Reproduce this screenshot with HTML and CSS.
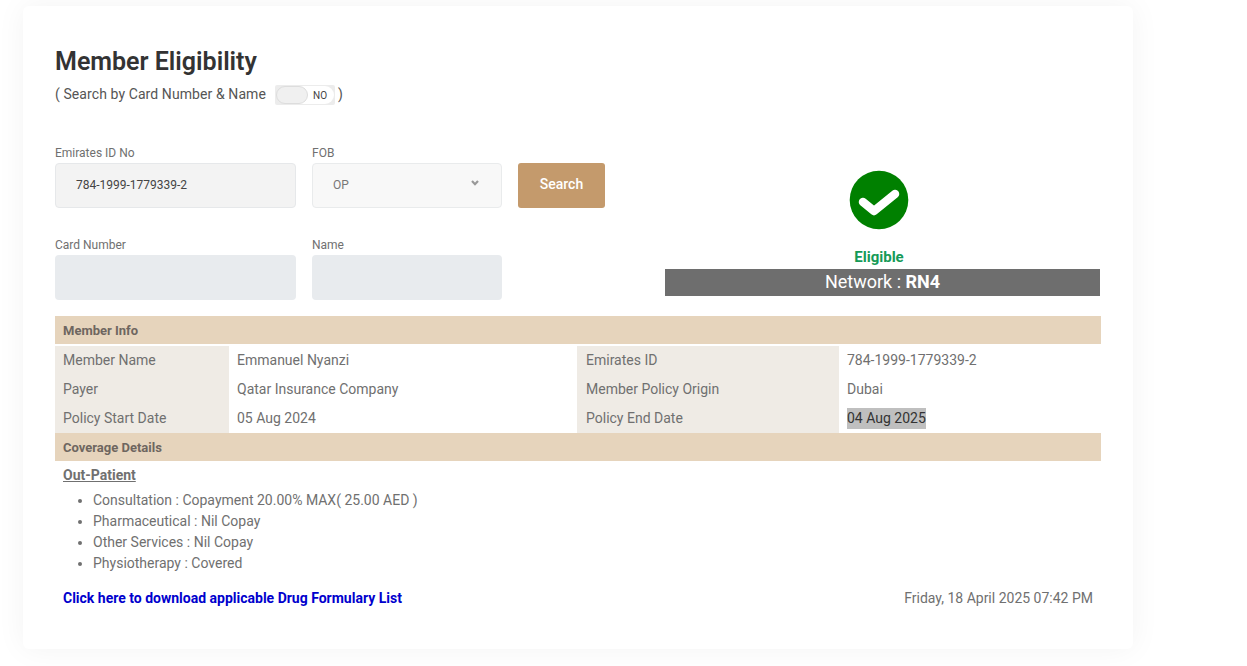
FILE: index.html
```html
<!DOCTYPE html>
<html lang="en">
<head>
<meta charset="utf-8">
<title>Member Eligibility</title>
<link rel="stylesheet" href="styles.css">
</head>
<body>
<main class="card">
  <h1 class="title">Member Eligibility</h1>
  <div class="subtitle">
    <span class="subtitle-text">( Search by Card Number &amp; Name</span>
    <span class="toggle"><span class="toggle-knob"></span><span class="toggle-text">NO</span></span>
    <span class="subtitle-text">)</span>
  </div>
  <section class="top">
    <div class="form">
      <div class="form-row">
        <div class="field field-wide">
          <label class="label">Emirates ID No</label>
          <div class="input input-filled">784-1999-1779339-2</div>
        </div>
        <div class="field field-narrow">
          <label class="label">FOB</label>
          <div class="input input-select">
            <span>OP</span>
            <svg class="chevron" width="8" height="6" viewBox="0 0 8 6"><path d="M1 1 L4 4.2 L7 1" fill="none" stroke="#999" stroke-width="2.2"/></svg>
          </div>
        </div>
        <button class="search">Search</button>
      </div>
      <div class="form-row">
        <div class="field field-wide">
          <label class="label">Card Number</label>
          <div class="input input-disabled"></div>
        </div>
        <div class="field field-narrow">
          <label class="label">Name</label>
          <div class="input input-disabled"></div>
        </div>
      </div>
    </div>
    <div class="status">
      <svg class="check" width="60" height="60" viewBox="0 0 60 60">
        <circle cx="30" cy="30" r="29.3" fill="#008000"/>
        <path d="M14 32 L25 41 L46 24" fill="none" stroke="#fff" stroke-width="8.5" stroke-linecap="round" stroke-linejoin="round"/>
      </svg>
      <div class="eligible">Eligible</div>
      <div class="network">Network : <b>RN4</b></div>
    </div>
  </section>
  <section class="info">
    <div class="band">Member Info</div>
    <div class="grid">
      <div class="key">Member Name</div><div class="val">Emmanuel Nyanzi</div>
      <div class="key">Emirates ID</div><div class="val">784-1999-1779339-2</div>
      <div class="key">Payer</div><div class="val">Qatar Insurance Company</div>
      <div class="key">Member Policy Origin</div><div class="val">Dubai</div>
      <div class="key">Policy Start Date</div><div class="val">05 Aug 2024</div>
      <div class="key">Policy End Date</div><div class="val"><span class="mark">04 Aug 2025</span></div>
    </div>
    <div class="band">Coverage Details</div>
    <div class="coverage">
      <div class="out">Out-Patient</div>
      <ul class="list">
        <li>Consultation : Copayment 20.00% MAX( 25.00 AED )</li>
        <li>Pharmaceutical : Nil Copay</li>
        <li>Other Services : Nil Copay</li>
        <li>Physiotherapy : Covered</li>
      </ul>
      <div class="foot">
        <a class="download" href="#">Click here to download applicable Drug Formulary List</a>
        <span class="stamp">Friday, 18 April 2025 07:42 PM</span>
      </div>
    </div>
  </section>
</main>
</body>
</html>
```
FILE: styles.css
```css
* { box-sizing: border-box; }
html, body { margin: 0; height: 100%; overflow: hidden; background: #fff; }
body {
  padding: 6px 114px 0 23px;
  font-family: Roboto, "Liberation Sans", sans-serif;
  font-size: 14px;
  color: #707070;
}
.card {
  height: 643px;
  padding: 39px 32px 0;
  background: #fff;
  border-radius: 6px;
  box-shadow: 0 0 30px rgba(0, 0, 0, 0.05);
}
.title {
  margin: 0;
  font-size: 25px;
  line-height: 33px;
  font-weight: 600;
  color: #333;
}
.subtitle {
  display: flex;
  align-items: center;
  height: 22px;
  margin-top: 6px;
  color: #555;
  font-size: 14px;
  letter-spacing: 0.09px;
}
.subtitle-text { padding-bottom: 2px; }
.toggle {
  display: flex;
  align-items: center;
  width: 60px;
  height: 20px;
  margin: 0 3px 0 9px;
  padding: 1px;
  background: #ececec;
  border-radius: 2px;
}
.toggle-knob {
  position: relative;
  z-index: 1;
  width: 32px;
  height: 18px;
  background: #f0f0f0;
  border: 1px solid #ddd;
  border-radius: 9px;
}
.toggle-text {
  flex: 1;
  height: 18px;
  margin-left: -10px;
  padding-left: 15px;
  background: #fff;
  border-radius: 0 9px 9px 0;
  font-size: 10px;
  line-height: 19px;
  color: #444;
  letter-spacing: 0;
}
.top {
  display: flex;
  height: 170px;
  margin-top: 40px;
}
.form { width: 610px; }
.form-row {
  display: flex;
  align-items: flex-end;
  gap: 16px;
  height: 62px;
  margin-bottom: 30px;
}
.field { display: flex; flex-direction: column; }
.field-wide { width: 241px; }
.field-narrow { width: 190px; }
.label {
  height: 17px;
  font-size: 12px;
  line-height: 14px;
  color: #707070;
}
.input {
  height: 45px;
  border-radius: 4px;
  font-size: 12px;
  line-height: 43px;
  color: #444;
}
.input-filled {
  padding-left: 20px;
  background: #f3f3f3;
  border: 1px solid #e6e8ea;
}
.input-select {
  display: flex;
  justify-content: space-between;
  padding: 0 22px 0 20px;
  background: #f8f8f8;
  border: 1px solid #e9ebec;
  color: #777;
}
.chevron { margin-top: 16px; }
.input-disabled { background: #e8ebee; }
.search {
  width: 87px;
  height: 45px;
  padding: 0 0 3px;
  border: 0;
  border-radius: 3px;
  background: #c49a6c;
  color: #fff;
  font-family: inherit;
  font-size: 14px;
  font-weight: 500;
}
.status {
  display: flex;
  flex-direction: column;
  align-items: center;
  width: 435px;
  margin-top: 24px;
}
.check { display: block; margin-right: 7px; }
.eligible {
  margin: 17px 7px 0 0;
  height: 22px;
  font-size: 15px;
  line-height: 20px;
  font-weight: 700;
  color: #159a57;
}
.network {
  width: 100%;
  height: 27px;
  background: #6e6e6e;
  color: #fff;
  font-size: 18px;
  line-height: 26px;
  text-align: center;
}
.network b { font-weight: 700; }
.info { width: 1046px; }
.band {
  height: 28px;
  padding-left: 8px;
  background: #e6d4bc;
  font-size: 13px;
  line-height: 29px;
  font-weight: 700;
  color: #6e6660;
}
.grid {
  display: grid;
  grid-template-columns: 174px 348px 262px 262px;
  grid-auto-rows: 29px;
  margin-top: 2px;
}
.key, .val { padding-left: 8px; line-height: 29px; }
.key { background: #efebe5; }
.key:nth-child(4n+3) { padding-left: 9px; }
.mark { display: inline-block; height: 21px; line-height: 21px; background: #bfbfbf; color: #333; }
.coverage { padding: 0 8px; }
.out {
  margin-top: 6px;
  font-weight: 700;
  line-height: 17px;
  text-decoration: underline;
}
.list {
  margin: 6px 0 0;
  padding-left: 30px;
  line-height: 21px;
}
.foot {
  display: flex;
  justify-content: space-between;
  margin-top: 14px;
  line-height: 20px;
}
.download {
  color: #0000cd;
  font-weight: 700;
  text-decoration: none;
}
.stamp { color: #707070; }
```
